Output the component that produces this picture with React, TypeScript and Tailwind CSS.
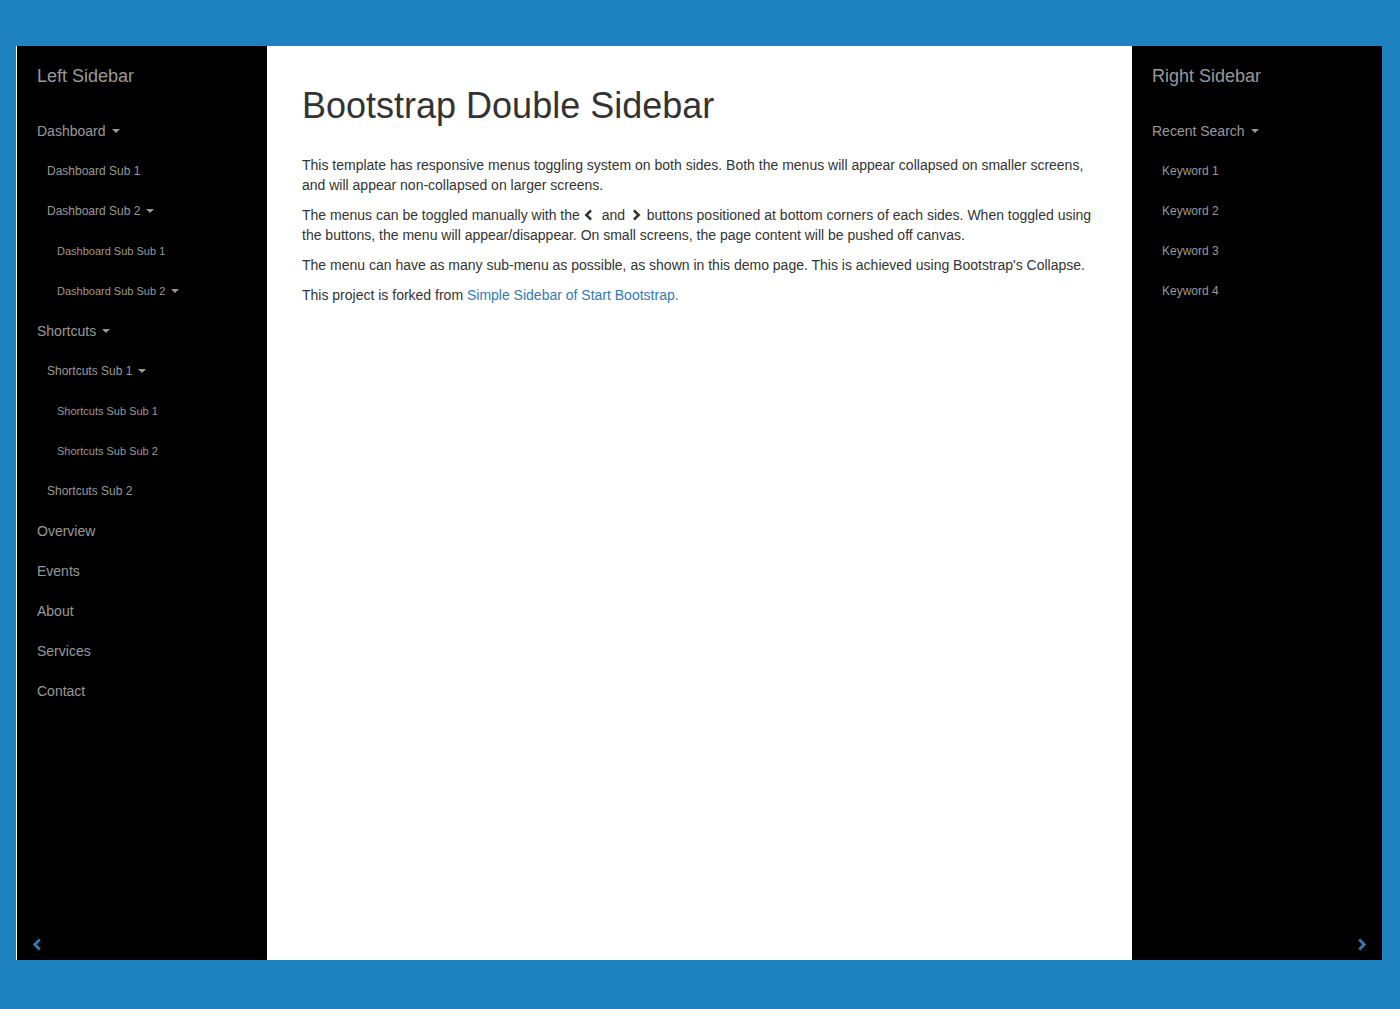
import React from "react";

type NavItem = {
  label: string;
  level: 0 | 1 | 2;
  caret?: boolean;
};

const leftNav: NavItem[] = [
  { label: "Dashboard", level: 0, caret: true },
  { label: "Dashboard Sub 1", level: 1 },
  { label: "Dashboard Sub 2", level: 1, caret: true },
  { label: "Dashboard Sub Sub 1", level: 2 },
  { label: "Dashboard Sub Sub 2", level: 2, caret: true },
  { label: "Shortcuts", level: 0, caret: true },
  { label: "Shortcuts Sub 1", level: 1, caret: true },
  { label: "Shortcuts Sub Sub 1", level: 2 },
  { label: "Shortcuts Sub Sub 2", level: 2 },
  { label: "Shortcuts Sub 2", level: 1 },
  { label: "Overview", level: 0 },
  { label: "Events", level: 0 },
  { label: "About", level: 0 },
  { label: "Services", level: 0 },
  { label: "Contact", level: 0 },
];

const rightNav: NavItem[] = [
  { label: "Recent Search", level: 0, caret: true },
  { label: "Keyword 1", level: 1 },
  { label: "Keyword 2", level: 1 },
  { label: "Keyword 3", level: 1 },
  { label: "Keyword 4", level: 1 },
];

const Caret = () => (
  <span className="ml-[6px] inline-block h-0 w-0 border-x-[4px] border-t-[4px] border-x-transparent border-t-[#999]" />
);

const Chevron = ({ dir, className }: { dir: "left" | "right"; className: string }) => (
  <svg viewBox="0 0 10 14" className={className} fill="none">
    <path
      d={dir === "left" ? "M8 1.5 L2.5 7 L8 12.5" : "M2 1.5 L7.5 7 L2 12.5"}
      stroke="currentColor"
      strokeWidth="3"
    />
  </svg>
);

const SideNav = ({ title, items }: { title: string; items: NavItem[] }) => (
  <div>
    <div className="px-5 pt-5 text-[18px] leading-[20px] text-[#999]">{title}</div>
    <ul className="mt-[25px]">
      {items.map((item) => (
        <li
          key={item.label}
          className={`flex h-10 items-center text-[#999] ${
            item.level === 0
              ? "pl-5 text-[14px]"
              : item.level === 1
              ? "pl-[30px] text-[12px]"
              : "pl-10 text-[11px]"
          }`}
        >
          <span>{item.label}</span>
          {item.caret && <Caret />}
        </li>
      ))}
    </ul>
  </div>
);

export default function App() {
  return (
    <div
      className="min-h-screen bg-[#1e82c0] pl-4 pt-[46px]"
      style={{ fontFamily: '"Liberation Sans", Arial, sans-serif' }}
    >
      <div className="flex h-[914px] w-[1366px] border-l border-white">
        <aside className="flex w-[250px] flex-col justify-between bg-black">
          <SideNav title="Left Sidebar" items={leftNav} />
          <div className="flex pb-[9px] pl-[15px]">
            <Chevron dir="left" className="h-[13px] w-[10px] text-[#337ab7]" />
          </div>
        </aside>

        <main className="w-[865px] bg-white px-[35px] pt-10 text-[14px] leading-[20px] text-[#333]">
          <h1 className="mb-[29px] text-[36px] leading-[40px]">Bootstrap Double Sidebar</h1>
          <p className="mb-[10px]">
            This template has responsive menus toggling system on both sides. Both the menus will
            appear collapsed on smaller screens, and will appear non-collapsed on larger screens.
          </p>
          <p className="mb-[10px]">
            The menus can be toggled manually with the{" "}
            <span className="inline-flex w-[14px] align-[-1px]">
              <Chevron dir="left" className="h-[12px] w-[9px]" />
            </span>{" "}
            and{" "}
            <span className="inline-flex w-[14px] justify-end pr-[2px] align-[-1px]">
              <Chevron dir="right" className="h-[12px] w-[9px]" />
            </span>{" "}
            buttons positioned at bottom corners of each sides. When toggled using the buttons, the
            menu will appear/disappear. On small screens, the page content will be pushed off canvas.
          </p>
          <p className="mb-[10px]">
            The menu can have as many sub-menu as possible, as shown in this demo page. This is
            achieved using Bootstrap's Collapse.
          </p>
          <p className="mb-[10px]">
            This project is forked from <a className="text-[#337ab7]">Simple Sidebar of Start Bootstrap.</a>
          </p>
        </main>

        <aside className="flex w-[250px] flex-col justify-between bg-black">
          <SideNav title="Right Sidebar" items={rightNav} />
          <div className="flex justify-end pb-[9px] pr-[15px]">
            <Chevron dir="right" className="h-[13px] w-[10px] text-[#337ab7]" />
          </div>
        </aside>
      </div>
    </div>
  );
}
